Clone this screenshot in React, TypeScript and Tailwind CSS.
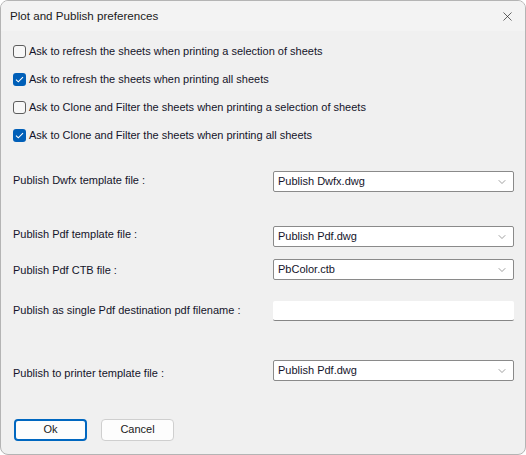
import { ChevronDown, X } from 'lucide-react';

const checks = [
  { label: 'Ask to refresh the sheets when printing a selection of sheets', on: false },
  { label: 'Ask to refresh the sheets when printing all sheets', on: true },
  { label: 'Ask to Clone and Filter the sheets when printing a selection of sheets', on: false },
  { label: 'Ask to Clone and Filter the sheets when printing all sheets', on: true },
];

const CheckBox = ({ on }: { on: boolean }) =>
  on ? (
    <span className="flex h-[13px] w-[13px] items-center justify-center rounded-[3px] bg-[#005fb8]">
      <svg width="9" height="7" viewBox="0 0 9 7" fill="none">
        <path d="M1 3.6 3.3 5.8 8 1.2" stroke="#fff" strokeWidth="1.1" />
      </svg>
    </span>
  ) : (
    <span className="h-[13px] w-[13px] rounded-[3px] border border-[#5d5d5d] bg-[#f7f7f7]" />
  );

const Combo = ({ value }: { value: string }) => (
  <div className="flex h-[21px] w-[241px] items-center justify-between rounded-[2px] border border-[#8a8a8a] bg-white pl-[4px] pr-[5px]">
    <span>{value}</span>
    <ChevronDown size={12} strokeWidth={1.2} className="text-[#606060]" />
  </div>
);

const App = () => {
  return (
    <div
      className="flex h-[455px] w-[526px] flex-col overflow-hidden rounded-[8px] border border-[#b4b4b4] bg-[#f0f0f0] text-[11px] text-[#14142a]"
      style={{ fontFamily: '"Liberation Sans", Arial, sans-serif' }}
    >
      <div className="flex h-[30px] shrink-0 items-center justify-between bg-[#f3f3f3] pl-[9px] pr-[10px] text-[#1a1a1a]">
        <span className="text-[11.6px]">Plot and Publish preferences</span>
        <X size={15} strokeWidth={1.1} className="text-[#222]" />
      </div>

      <div className="flex flex-col pl-[12px] pt-[13px]">
        <div className="flex flex-col gap-[14px]">
          {checks.map((c) => (
            <label key={c.label} className="flex h-[14px] items-center gap-[3px]">
              <CheckBox on={c.on} />
              <span>{c.label}</span>
            </label>
          ))}
        </div>

        <div className="mt-[29px] flex items-start justify-between pr-[11px]">
          <span className="pt-[1px]">Publish Dwfx template file :</span>
          <Combo value="Publish Dwfx.dwg" />
        </div>

        <div className="mt-[34px] flex items-start justify-between pr-[11px]">
          <span className="pt-[0px]">Publish Pdf template file :</span>
          <Combo value="Publish Pdf.dwg" />
        </div>

        <div className="mt-[12px] flex items-start justify-between pr-[11px]">
          <span className="pt-[3px]">Publish Pdf CTB file :</span>
          <Combo value="PbColor.ctb" />
        </div>

        <div className="mt-[21px] flex items-start justify-between pr-[11px]">
          <span className="pt-[1px]">Publish as single Pdf destination pdf filename :</span>
          <div className="h-[20px] w-[241px] rounded-[2px] border-b border-b-[#868686] bg-white" />
        </div>

        <div className="mt-[39px] flex items-start justify-between pr-[11px]">
          <span className="pt-[5px]">Publish to printer template file :</span>
          <Combo value="Publish Pdf.dwg" />
        </div>

        <div className="mt-[37px] flex gap-[14px] pl-[1px]">
          <button className="h-[22px] w-[73px] rounded-[4px] border-2 border-[#0067c0] bg-[#fdfdfd] text-[#1a1a1a]">
            Ok
          </button>
          <button className="h-[22px] w-[73px] rounded-[4px] border border-[#cfcfcf] bg-[#fdfdfd] text-[#1a1a1a]">
            Cancel
          </button>
        </div>
      </div>
    </div>
  );
};

export default App;
